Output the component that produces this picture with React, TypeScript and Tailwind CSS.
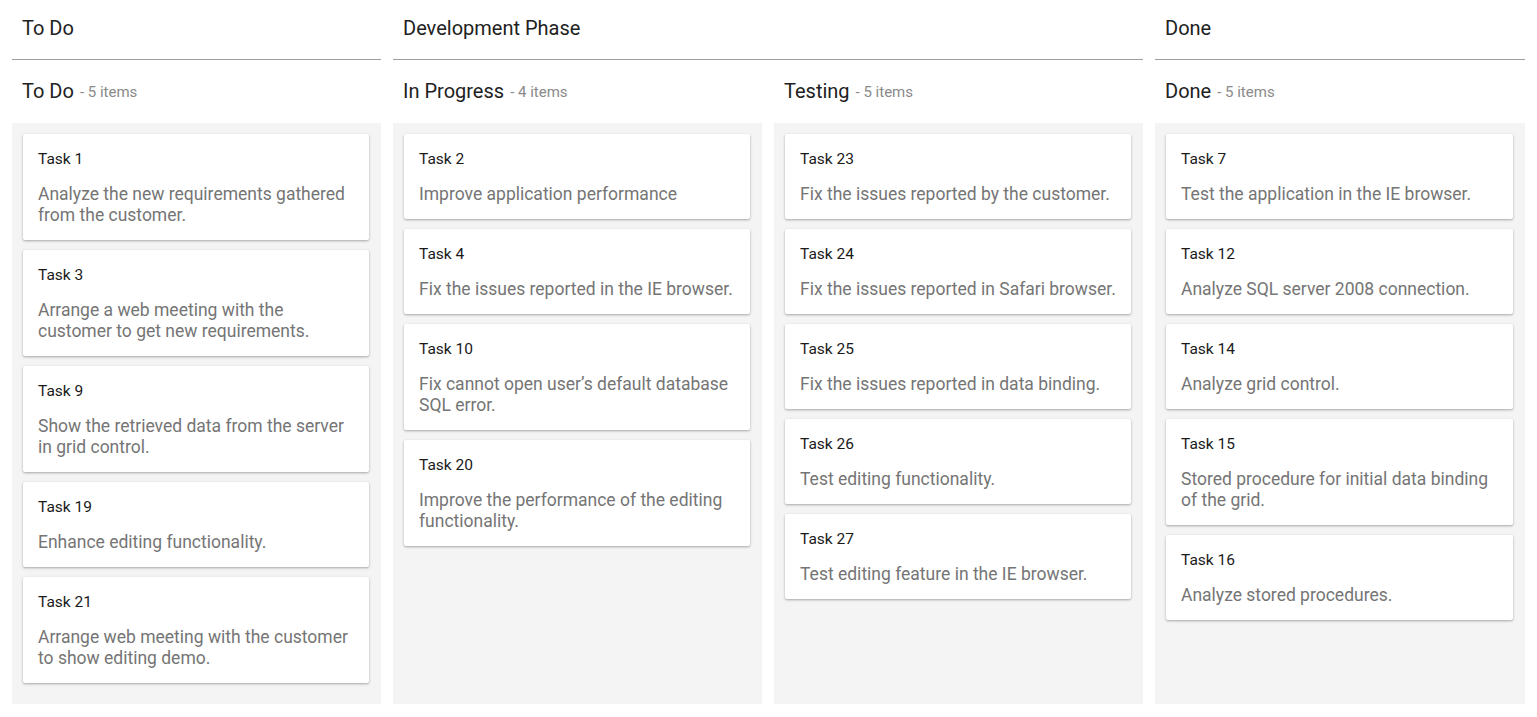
import React from "react";

type Card = { title: string; desc: string };

const todo: Card[] = [
  { title: "Task 1", desc: "Analyze the new requirements gathered from the customer." },
  { title: "Task 3", desc: "Arrange a web meeting with the customer to get new requirements." },
  { title: "Task 9", desc: "Show the retrieved data from the server in grid control." },
  { title: "Task 19", desc: "Enhance editing functionality." },
  { title: "Task 21", desc: "Arrange web meeting with the customer to show editing demo." },
];
const inProgress: Card[] = [
  { title: "Task 2", desc: "Improve application performance" },
  { title: "Task 4", desc: "Fix the issues reported in the IE browser." },
  { title: "Task 10", desc: "Fix cannot open user\u2019s default database SQL error." },
  { title: "Task 20", desc: "Improve the performance of the editing functionality." },
];
const testing: Card[] = [
  { title: "Task 23", desc: "Fix the issues reported by the customer." },
  { title: "Task 24", desc: "Fix the issues reported in Safari browser." },
  { title: "Task 25", desc: "Fix the issues reported in data binding." },
  { title: "Task 26", desc: "Test editing functionality." },
  { title: "Task 27", desc: "Test editing feature in the IE browser." },
];
const done: Card[] = [
  { title: "Task 7", desc: "Test the application in the IE browser." },
  { title: "Task 12", desc: "Analyze SQL server 2008 connection." },
  { title: "Task 14", desc: "Analyze grid control." },
  { title: "Task 15", desc: "Stored procedure for initial data binding of the grid." },
  { title: "Task 16", desc: "Analyze stored procedures." },
];

function ColHeader({ name, count }: { name: string; count: number }) {
  return (
    <div className="h-[63px] flex items-center px-[10px] pb-[1px]">
      <span className="text-[20px] leading-[24px] text-[#212121]">{name}</span>
      <span className="text-[15px] leading-[20px] text-[#8a8a8a] ml-[6px] mt-[1px]">- {count} items</span>
    </div>
  );
}

function Column({ cards }: { cards: Card[] }) {
  return (
    <div className="bg-[#f4f4f4] h-[581px] pt-[11px] pl-[11px] pr-[12px] flex flex-col gap-[10px]">
      {cards.map((c) => (
        <div
          key={c.title}
          className="bg-white rounded-[2px] shadow-[0_1px_3px_rgba(0,0,0,0.22),0_1px_2px_rgba(0,0,0,0.12)] px-[15px] pt-[15px] pb-[14px]"
        >
          <div className="text-[15.5px] leading-[20px] text-[#1a1a1a]">{c.title}</div>
          <div className="text-[17.5px] leading-[21px] text-[#757575] mt-[15px]">{c.desc}</div>
        </div>
      ))}
    </div>
  );
}

export default function App() {
  return (
    <div className="w-[1537px] h-[717px] bg-white font-['Roboto',sans-serif] px-3">
      <div className="grid grid-cols-[369px_369px_369px_370px] gap-x-3">
        <div className="h-[60px] border-b border-[#9e9e9e] flex items-center px-[10px] pb-[3px]">
          <span className="text-[20px] leading-[24px] text-[#212121]">To Do</span>
        </div>
        <div className="col-span-2 h-[60px] border-b border-[#9e9e9e] flex items-center px-[10px] pb-[3px]">
          <span className="text-[20px] leading-[24px] text-[#212121]">Development Phase</span>
        </div>
        <div className="h-[60px] border-b border-[#9e9e9e] flex items-center px-[10px] pb-[3px]">
          <span className="text-[20px] leading-[24px] text-[#212121]">Done</span>
        </div>

        <ColHeader name="To Do" count={5} />
        <ColHeader name="In Progress" count={4} />
        <ColHeader name="Testing" count={5} />
        <ColHeader name="Done" count={5} />

        <Column cards={todo} />
        <Column cards={inProgress} />
        <Column cards={testing} />
        <Column cards={done} />
      </div>
    </div>
  );
}
